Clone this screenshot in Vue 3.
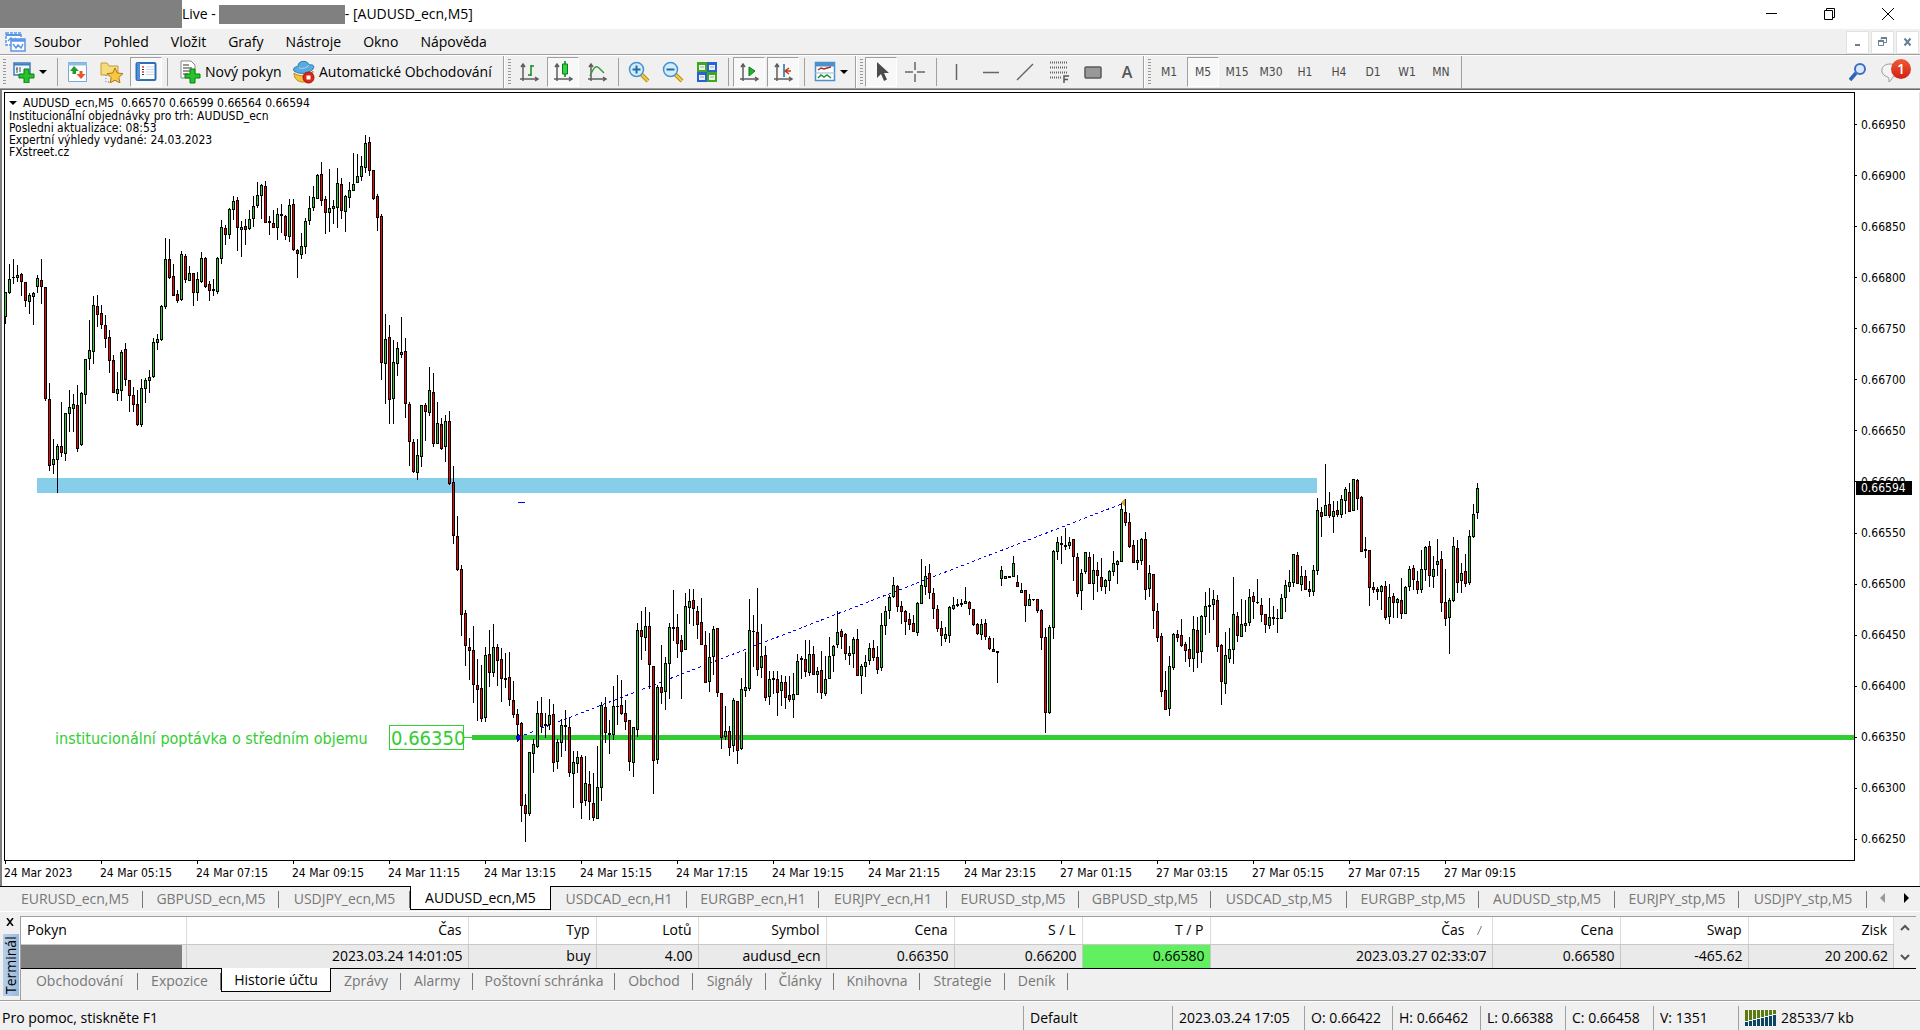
<script setup>
const menu = ['Soubor', 'Pohled', 'Vložit', 'Grafy', 'Nástroje', 'Okno', 'Nápověda']
const timeframes = ['M1', 'M5', 'M15', 'M30', 'H1', 'H4', 'D1', 'W1', 'MN']

const prices = Array.from({ length: 15 }, (_, i) => (0.6695 - i * 0.0005).toFixed(5))

const times = [
  '24 Mar 2023', '24 Mar 05:15', '24 Mar 07:15', '24 Mar 09:15', '24 Mar 11:15', '24 Mar 13:15',
  '24 Mar 15:15', '24 Mar 17:15', '24 Mar 19:15', '24 Mar 21:15', '24 Mar 23:15',
  '27 Mar 01:15', '27 Mar 03:15', '27 Mar 05:15', '27 Mar 07:15', '27 Mar 09:15'
]

const chartTabs = [
  ['EURUSD_ecn,M5', 136], ['GBPUSD_ecn,M5', 136], ['USDJPY_ecn,M5', 131], ['AUDUSD_ecn,M5', 141],
  ['USDCAD_ecn,H1', 136], ['EURGBP_ecn,H1', 132], ['EURJPY_ecn,H1', 128], ['EURUSD_stp,M5', 132],
  ['GBPUSD_stp,M5', 132], ['USDCAD_stp,M5', 136], ['EURGBP_stp,M5', 132], ['AUDUSD_stp,M5', 136],
  ['EURJPY_stp,M5', 124], ['USDJPY_stp,M5', 128]
]

const terminalTabs = [
  ['Obchodování', 117], ['Expozice', 83], ['Historie účtu', 110], ['Zprávy', 70], ['Alarmy', 72],
  ['Poštovní schránka', 142], ['Obchod', 78], ['Signály', 73], ['Články', 68], ['Knihovna', 86],
  ['Strategie', 85], ['Deník', 63]
]

const columns = [
  ['Pokyn', 165], ['Čas', 282], ['Typ', 128], ['Lotů', 102], ['Symbol', 128], ['Cena', 128],
  ['S / L', 128], ['T / P', 128], ['Čas', 282], ['Cena', 128], ['Swap', 128], ['Zisk', 0]
]
const order = [
  '', '2023.03.24 14:01:05', 'buy', '4.00', 'audusd_ecn', '0.66350', '0.66200', '0.66580',
  '2023.03.27 02:33:07', '0.66580', '-465.62', '20 200.62'
]

// One bar per entry: high, body top, body bottom, low, direction (g up, r down, k flat)
const series = `
292 292 317 324 g|264 279 293 294 g|259 277 278 284 k|265 275 278 282 g|273 274 282 296 r|282 282 301 307 r|293 295 302 314 g|292 293 297 325 g
275 278 287 293 g|259 280 287 304 r|287 287 399 401 r|383 399 466 471 r|439 459 465 474 g|444 446 460 493 g|402 446 453 457 r|413 413 454 461 g
390 407 414 432 g|394 404 409 432 g|385 405 449 452 r|392 393 445 446 g|359 359 395 404 g|320 350 359 370 g|296 305 352 364 g|295 306 315 327 r
305 313 325 329 r|315 325 339 348 r|330 337 361 373 r|355 360 393 393 r|372 389 394 401 g|350 352 391 401 g|343 349 380 386 r|380 380 396 412 r
387 395 405 412 r|390 404 425 426 r|379 388 425 427 g|378 380 389 403 g|370 377 381 393 g|338 342 377 378 g|334 339 343 350 g|305 306 340 341 g
238 259 307 309 g|239 259 278 279 r|264 276 296 296 r|290 294 301 303 r|251 254 300 301 g|254 256 280 283 r|266 273 281 281 g|273 273 293 306 r
272 279 293 301 g|252 258 282 283 g|257 258 287 288 r|281 284 291 301 r|279 289 291 296 k|257 258 292 294 g|220 227 259 264 g|225 228 235 245 r
208 209 235 239 g|196 201 210 220 g|197 200 228 251 r|221 227 230 257 g|219 226 230 245 r|210 219 229 230 g|196 206 219 227 g|182 195 206 208 g
184 185 196 219 g|181 186 223 223 r|216 221 223 235 k|210 223 228 228 r|208 214 228 240 g|204 214 216 233 k|215 216 236 240 r|199 205 237 242 g
199 204 250 251 r|249 250 254 278 r|233 246 255 259 g|218 221 247 254 g|196 208 221 225 g|186 197 208 211 g|174 175 199 199 g|162 174 201 206 r
196 199 213 234 r|169 208 213 232 g|200 206 209 224 g|168 183 208 228 g|178 184 211 219 r|195 196 212 232 g|182 190 198 208 g|153 184 191 191 g
154 176 183 183 g|156 166 177 181 g|135 143 168 173 g|137 142 171 176 r|170 170 199 200 r|194 196 218 231 r|214 216 363 380 r|314 339 364 404 g
325 337 400 424 r|340 362 399 424 g|342 348 364 376 g|317 352 355 358 g|338 351 404 418 r|402 404 442 466 r|439 442 472 473 r|439 455 473 480 g
405 405 457 467 g|403 405 412 441 r|367 390 413 416 g|373 392 444 447 r|402 423 444 444 g|418 424 449 450 r|415 421 447 462 g|411 421 484 485 r
466 482 536 544 r|516 536 570 571 r|565 569 615 636 r|610 613 646 666 r|638 647 651 680 r|626 650 685 703 r|659 685 690 721 r|665 688 719 722 r
647 655 718 722 g|630 654 673 687 r|624 647 673 677 g|644 647 661 686 r|648 659 679 702 r|653 678 680 688 k|652 677 700 706 r|681 700 715 718 r
709 714 725 742 r|722 723 806 822 r|794 805 814 842 r|752 752 814 816 g|739 744 754 773 g|701 713 747 748 g|697 713 727 733 r|713 724 726 738 k
699 715 725 730 g|704 714 763 772 r|739 742 762 769 g|719 725 743 757 g|710 725 727 751 k|718 727 773 777 r|751 762 774 808 g|751 757 764 773 g
755 757 803 819 r|756 783 801 806 g|771 784 802 820 r|773 803 818 821 r|746 787 819 819 g|702 705 788 801 g|697 707 733 743 r|720 733 735 754 k
686 706 735 740 g|675 706 707 725 k|680 705 714 715 r|700 713 722 730 r|720 720 762 771 r|727 727 763 777 g|623 630 730 737 g|611 630 637 660 r
607 626 638 651 g|612 626 665 689 r|666 666 761 794 r|685 687 760 764 g|645 687 693 704 r|657 663 692 710 g|623 627 664 699 g|590 627 629 641 k
614 627 644 658 r|635 640 652 699 r|593 606 650 650 g|589 601 608 624 g|589 600 609 626 r|606 611 625 639 r|598 622 645 645 r|631 645 683 683 r
633 657 682 692 g|626 629 657 675 g|628 628 693 697 r|693 693 738 749 r|706 731 737 740 g|726 731 748 756 r|698 700 746 752 g|701 701 751 764 r
678 689 749 750 g|652 687 691 697 g|599 630 689 691 g|615 631 632 667 k|588 632 670 676 r|624 656 668 678 g|646 655 698 701 r|671 679 697 705 g
671 678 680 694 k|671 679 693 716 r|675 682 691 706 g|676 682 698 709 r|676 695 700 702 r|673 694 700 718 g|654 661 695 695 g|656 658 660 679 k
640 659 672 677 r|640 654 673 676 g|646 654 675 675 r|667 671 675 693 g|651 670 693 699 r|656 679 694 696 g|637 656 679 679 g|645 646 656 672 g
611 632 645 648 g|629 631 637 649 r|633 634 654 660 r|646 653 656 665 g|637 639 654 668 g|629 639 676 676 r|664 666 676 694 g|655 662 667 677 g
643 648 661 665 g|640 648 658 661 r|646 657 670 674 r|613 625 668 671 g|606 611 626 635 g|595 597 611 619 g|577 585 597 598 g|585 586 607 612 r
601 606 612 624 r|610 611 622 635 r|613 619 625 630 r|615 623 632 632 r|602 603 633 636 g|559 585 604 604 g|566 576 587 595 g|564 573 593 599 r
588 593 609 619 r|605 609 629 632 r|621 628 636 646 r|627 634 639 642 g|606 607 636 643 g|597 605 609 610 g|599 604 606 607 k|599 603 605 607 k
587 601 604 604 g|601 602 609 615 r|609 609 625 626 r|623 624 634 635 r|619 624 635 640 g|619 623 637 640 r|636 638 649 650 r|638 649 652 652 r
651 651 653 683 k|566 570 579 586 g|576 576 579 579 g|576 576 578 578 k|556 563 577 577 g|575 582 587 587 r|583 590 593 593 g|590 590 606 622 r
594 599 606 606 g|599 599 600 601 k|599 599 611 613 r|609 610 638 650 r|628 637 713 733 r|625 627 713 714 g|550 551 628 639 g|537 542 552 560 g
536 543 545 564 k|528 545 547 550 k|537 542 546 549 g|539 539 557 581 r|553 557 594 597 r|569 573 591 610 g|552 552 572 574 g|552 557 584 584 r
554 570 584 600 g|562 570 576 592 r|558 577 587 591 r|579 580 587 594 g|570 571 581 591 g|551 563 572 576 g|560 561 565 584 g|503 509 562 562 g
499 512 523 526 r|513 522 547 548 r|540 545 563 563 r|540 560 563 570 g|538 539 561 565 g|532 539 590 600 r|565 573 589 597 g|574 574 611 629 r
603 611 638 642 r|633 636 692 697 r|671 690 710 710 r|656 666 709 716 g|633 634 668 670 g|630 634 638 642 r|619 635 646 647 r|642 644 651 662 r
637 649 659 667 r|616 629 659 672 g|617 630 653 668 r|615 616 652 663 g|592 606 617 635 g|588 605 607 633 k|590 599 605 620 g|595 600 647 652 r
644 645 682 705 r|632 655 684 694 g|628 649 659 663 g|577 614 650 664 g|612 616 636 642 r|599 624 637 637 g|600 623 626 632 g|589 597 623 626 g
592 596 602 619 r|579 602 603 604 k|598 605 615 622 r|614 614 625 633 r|598 617 626 629 g|606 617 619 625 k|609 618 619 633 k|594 598 619 619 g
580 585 598 612 g|570 582 587 592 g|554 554 583 587 g|552 555 584 584 r|566 576 585 591 g|570 576 590 590 r|581 589 592 597 r|565 570 592 596 g
498 510 571 575 g|507 512 517 537 r|464 505 516 516 g|492 504 516 518 r|501 511 517 533 g|501 510 515 517 r|495 499 515 518 g|487 489 501 514 g
483 492 512 512 r|479 479 511 511 g|479 480 499 510 r|496 497 552 552 r|537 549 551 558 k|550 550 588 606 r|582 587 590 593 r|587 589 592 600 r
585 586 592 610 g|581 586 618 620 r|584 597 617 624 g|593 596 603 618 r|598 599 603 618 g|578 600 614 619 r|586 587 614 614 g|566 569 587 591 g
565 568 580 590 r|571 581 590 594 r|550 569 590 593 g|546 547 570 581 g|541 546 576 587 r|556 569 577 588 g|539 561 565 576 g|551 559 603 612 r
569 602 619 626 r|598 600 618 654 g|537 546 601 602 g|540 548 583 593 r|563 573 581 593 g|554 571 584 587 r|530 536 583 585 g|504 514 537 538 g
483 488 513 519 g`

const candles = series.trim().split(/[\n|]/).map((bar, i) => {
  const [high, top, bottom, low, dir] = bar.split(' ')
  return { x: 5 + i * 4, high: +high, top: +top, bottom: +bottom, low: +low, dir }
})
</script>

<template>
  <div class="app">
    <header class="title">
      <span class="redacted account"></span>
      <span>Live -</span>
      <span class="redacted server"></span>
      <span>- [AUDUSD_ecn,M5]</span>
      <div class="window-buttons">
        <button aria-label="Minimalizovat"><svg width="12" height="12"><path d="M0 5.500h11" stroke="#000" /></svg></button>
        <button aria-label="Obnovit"><svg width="12" height="12" fill="none" stroke="#000"><path d="M.5 2.500h8v9h-8zM2.500 2.500v-2h8v9h-2" /></svg></button>
        <button aria-label="Zavřít"><svg width="12" height="12"><path d="M0 0l12 12M12 0L0 12" stroke="#000" /></svg></button>
      </div>
    </header>

    <nav class="menu">
      <svg width="21" height="20" fill="none" stroke="#5b95e6" stroke-width="1.500">
        <path d="M1 1h15v12H1z" fill="#fff" stroke-dasharray="3 1" /><path d="M1 3h15" stroke-width="2" /><path d="M3 9l3-3 2 3 3-3" />
        <path d="M6 7h14v12H6z" fill="#fff" /><path d="M6 8.500h14" stroke-width="2.500" /><path d="M8 12l3 4 2-3 3 3 2-4" />
      </svg>
      <button v-for="m in menu" :key="m">{{ m }}</button>
      <div class="mdi">
        <button aria-label="Minimalizovat graf"><svg width="10" height="10"><path d="M2 7h5v2H2z" fill="#6b7f92" /></svg></button>
        <button aria-label="Obnovit graf"><svg width="10" height="10" fill="none" stroke="#6b7f92"><path d="M.5 4.500h5v4h-5zM3 2.500V1.500h5.500v4H6" /><path d="M0 4h6M3 1h6" stroke-width="2" /></svg></button>
        <button aria-label="Zavřít graf"><svg width="10" height="10"><path d="M1.500 1.500l6 7M7.500 1.500l-6 7" stroke="#6b7f92" stroke-width="2" /></svg></button>
      </div>
    </nav>

    <div class="toolbar">
      <div class="group">
        <i class="grip"></i>
        <button class="drop new" aria-label="Nový graf">
          <svg width="24" height="22"><path d="M2 2h16v12H2z" fill="#eef6ff" stroke="#3d7fbc" stroke-width="1.500" /><path d="M2 3.500h16" stroke="#3d7fbc" stroke-width="2" /><path d="M5 6v6M4 8h2M8 6v5" stroke="#555" /><path d="M12 8h5v5h5v4h-5v5h-5v-5H7v-4h5z" fill="#27c32b" stroke="#0d7d14" /></svg>
          <i class="caret"></i>
        </button>
        <i class="sep"></i>
        <button aria-label="Přehled trhu"><svg width="22" height="22"><path d="M1.500 1.500h18v19h-18z" fill="#fff" stroke="#77a9d6" /><path d="M1 3h19" stroke="#8bbce8" stroke-width="3" /><path d="M7 5l5 5H9v3H5.500v-3H3z" fill="#1f9d2a" /><path d="M14 18l-4.500-5h3v-3h3v3h3z" fill="#e8562a" /></svg></button>
        <button aria-label="Navigátor"><svg width="24" height="22"><path d="M1 2h6l2 3h9v9H1z" fill="#f7dc7c" stroke="#c69a33" /><path d="M6 14v7h5" fill="none" stroke="#777" stroke-dasharray="1 2" /><path d="M15 7l2.300 5 5.700.6-4.200 3.900 1.200 5.500-5-2.800-5 2.800 1.200-5.500L7 12.600l5.700-.6z" fill="#f9c642" stroke="#a8791c" /></svg></button>
        <button class="on" aria-label="Terminál"><svg width="22" height="22"><rect x="1.500" y="2" width="19" height="17" rx="1" fill="#fff" stroke="#2f6fb9" stroke-width="2" /><path d="M2 2h3v17H2z" fill="#4c8fd6" /><path d="M7 6h2M7 11h2" stroke="#e33" stroke-width="1.500" /><path d="M7 8.500h2M7 13.500h2" stroke="#333" /><path d="M11 6h8M11 8.500h8M11 11h8M11 13.500h8" stroke="#c9d6e6" /></svg></button>
        <i class="sep"></i>
        <button class="text order"><svg width="22" height="24"><path d="M2 1h10l4 4v13H2z" fill="#fff" stroke="#8a8a8a" /><path d="M4 5h6M4 8h9M4 11h9M4 14h5" stroke="#777" stroke-width="1.500" /><path d="M11 9h5v5h5v4h-5v5h-5v-5H6v-4h5z" fill="#27c32b" stroke="#0d7d14" /></svg>Nový pokyn</button>
        <button class="text auto"><svg width="22" height="24"><path d="M1 13c5 4 14 4 19-2-1 8-5 11-10 11S1 19 1 13z" fill="#f5c43c" stroke="#b98a1c" /><path d="M1 11C-1 7 4 7 5 6c0-6 10-6 11-1 4-1 6 1 4 4-4 5-13 6-19 2z" fill="#5aa9df" stroke="#2c7ab5" /><path d="M6 8c3 1 8 0 10-3" fill="none" stroke="#a8d6f5" /><circle cx="15.500" cy="17.500" r="5.500" fill="#dd2718" stroke="#a31409" /><path d="M13.500 15.500h4v4h-4z" fill="#fff" /></svg>Automatické Obchodování</button>
      </div>
      <div class="group">
        <i class="grip"></i>
        <button aria-label="Sloupcový graf"><svg width="22" height="22"><path d="M5 3v17M2 18h17M3 6l2-3 2 3M17 16l3 2-3 2" fill="none" stroke="#5d5d5d" stroke-width="1.500" /><path d="M13 4v11M13 5h3M10 14h3" stroke="#128a1e" stroke-width="1.500" /></svg></button>
        <button class="on" aria-label="Svíčkový graf"><svg width="22" height="22"><path d="M5 3v17M2 18h17M3 6l2-3 2 3M17 16l3 2-3 2" fill="none" stroke="#5d5d5d" stroke-width="1.500" /><path d="M13 0v16" stroke="#0b7d16" stroke-width="1.500" /><path d="M10.500 3h5v10h-5z" fill="#35d340" stroke="#0b7d16" /></svg></button>
        <button aria-label="Čárový graf"><svg width="22" height="22"><path d="M5 3v17M2 18h17M3 6l2-3 2 3M17 16l3 2-3 2" fill="none" stroke="#5d5d5d" stroke-width="1.500" /><path d="M4 15c4-9 6-11 9-8l5 5" fill="none" stroke="#3c9a45" stroke-width="1.500" /></svg></button>
        <i class="sep"></i>
        <button aria-label="Přiblížit"><svg width="22" height="22"><path d="M13 13l7 7" stroke="#b88a12" stroke-width="4" /><path d="M13 13l7 7" stroke="#f2cf4d" stroke-width="2" /><circle cx="8.500" cy="8.500" r="7" fill="#d5ecfb" stroke="#4791cf" stroke-width="1.500" /><path d="M4.500 8.500h8M8.500 4.500v8" stroke="#1e6db0" stroke-width="2" /></svg></button>
        <button aria-label="Oddálit"><svg width="22" height="22"><path d="M13 13l7 7" stroke="#b88a12" stroke-width="4" /><path d="M13 13l7 7" stroke="#f2cf4d" stroke-width="2" /><circle cx="8.500" cy="8.500" r="7" fill="#d5ecfb" stroke="#4791cf" stroke-width="1.500" /><path d="M4.500 8.500h8" stroke="#1e6db0" stroke-width="2" /></svg></button>
        <button aria-label="Uspořádat okna"><svg width="22" height="22"><path d="M1 1h10v10H1zM11 11h10v10H11z" fill="#3fa91d" /><path d="M11 1h10v10H11zM1 11h10v10H1z" fill="#2b62d3" /><path d="M3 4h6v5H3zM13 4h6v5h-6zM3 14h6v5H3zM13 14h6v5h-6z" fill="#fff" opacity=".9" /><path d="M4 6h4M14 6h4M4 16h4M14 16h4" stroke="#9ab" /></svg></button>
        <i class="sep"></i>
        <button class="on" aria-label="Automatický posun"><svg width="22" height="22"><path d="M5 3v17M2 18h17M3 6l2-3 2 3M17 16l3 2-3 2" fill="none" stroke="#5d5d5d" stroke-width="1.500" /><path d="M11 6l6 4-6 5z" fill="#23b32e" stroke="#0b7d16" /></svg></button>
        <button class="on" aria-label="Odsazení grafu"><svg width="22" height="22"><path d="M5 3v17M2 18h17M3 6l2-3 2 3M17 16l3 2-3 2" fill="none" stroke="#5d5d5d" stroke-width="1.500" /><path d="M12 3v13" stroke="#1e6db0" stroke-width="1.500" /><path d="M13 10h6M17 7l-4 3 4 3" fill="none" stroke="#c23b12" stroke-width="1.500" /></svg></button>
        <i class="sep"></i>
        <button class="drop" aria-label="Šablony"><svg width="22" height="22"><path d="M1.500 1.500h19v18h-19z" fill="#fff" stroke="#4a90cf" stroke-width="1.500" /><path d="M1 3.500h20" stroke="#4a90cf" stroke-width="4" /><path d="M1 12h20" stroke="#8dbbe2" /><path d="M4 9l3-2 3 1 3-1 4-1" fill="none" stroke="#b02c18" stroke-width="1.500" /><path d="M4 17l3-3 3 2 3-2 4 3" fill="none" stroke="#1d9427" stroke-width="1.500" /></svg><i class="caret"></i></button>
      </div>
      <div class="group objects">
        <i class="grip"></i>
        <button class="on" aria-label="Kurzor"><svg width="22" height="22"><path d="M7 1v16l4-4 3 7 3-1.500-3-6.500h5z" fill="#4b4b4b" /></svg></button>
        <button aria-label="Zaměřovač"><svg width="22" height="22"><path d="M11 1v8M11 13v8M1 11h8M13 11h8" stroke="#666" stroke-width="1.500" /></svg></button>
        <i class="sep"></i>
        <button aria-label="Svislá čára"><svg width="22" height="22"><path d="M10.500 3v16" stroke="#666" stroke-width="1.500" /></svg></button>
        <button aria-label="Vodorovná čára"><svg width="22" height="22"><path d="M3 11.500h16" stroke="#666" stroke-width="1.500" /></svg></button>
        <button aria-label="Trendová čára"><svg width="22" height="22"><path d="M3 19L19 3" stroke="#666" stroke-width="1.500" /></svg></button>
        <button aria-label="Fibonacci"><svg width="22" height="22"><path d="M2 1.500h18M2 6.500h18M2 11.500h18M2 16.500h12" stroke="#666" stroke-dasharray="1 1" stroke-width="2" /><path d="M16 22v-7h5M16 18.500h4" fill="none" stroke="#555" stroke-width="1.500" /></svg></button>
        <button aria-label="Obdélník"><svg width="22" height="22"><rect x="3" y="6" width="16" height="11" rx="1" fill="#999" stroke="#5a5a5a" stroke-width="1.500" /></svg></button>
        <button class="letter">A</button>
      </div>
      <div class="group">
        <i class="grip"></i>
        <button v-for="t in timeframes" :key="t" class="tf" :class="{ on: t === 'M5' }">{{ t }}</button>
      </div>
      <div class="tools-right">
        <button aria-label="Hledat"><svg width="20" height="20"><path d="M8 11l-6 7" stroke="#2d63b8" stroke-width="3.500" /><circle cx="12" cy="7" r="5" fill="#dce9fa" stroke="#3a6fc4" stroke-width="2" /></svg></button>
        <button class="chat" aria-label="Zprávy"><svg width="24" height="22"><path d="M10 3c10 0 12 10 3 13-1 0-1 3-4 5 0-3 0-4-1-5C-1 14 0 3 10 3z" fill="#f4f4f4" stroke="#999" /></svg><b>1</b></button>
      </div>
    </div>

    <main class="chart">
      <div class="plot">
        <svg class="canvas" width="100%" height="767" shape-rendering="crispEdges">
          <g transform="translate(-5,-93)">
            <rect x="37" y="478" width="1280" height="15" fill="#87ceeb" />
            <path d="M464 737.500h8" stroke="#32cd32" />
            <rect x="472" y="735" width="3000" height="5" fill="#32cd32" />
            <rect x="389.500" y="725.500" width="74" height="24" fill="#fff" stroke="#32cd32" />
            <text x="391" y="745" class="level">0.66350</text>
            <text x="55" y="744" class="note">institucionální poptávka o středním objemu</text>
            <path d="M519 737L1124 503" stroke="#00f" stroke-dasharray="3 3" />
            <path d="M518 502.500h7" stroke="#00f" />
            <path d="M1125 498v9l-4-4z" fill="#daa520" />
            <g v-for="c in candles" :key="c.x">
              <rect :x="c.x" :y="c.high" width="1" :height="c.low - c.high" />
              <rect :x="c.x - 1" :y="c.top" width="3" :height="c.bottom - c.top" />
              <rect v-if="c.dir !== 'k'" :x="c.x" :y="c.top + 1" width="1" :height="c.bottom - c.top - 2" :class="c.dir" />
            </g>
            <path d="M516 736h2v-2h1v1h1v1h1v3h-1v1h-1v1h-1v-2h-2z" fill="#00f" />
          </g>
        </svg>
        <div class="info">
          <p class="quote"><i class="caret"></i>AUDUSD_ecn,M5&nbsp; 0.66570 0.66599 0.66564 0.66594</p>
          <p>Institucionální objednávky pro trh: AUDUSD_ecn</p>
          <p>Posledni aktualizace: 08:53</p>
          <p>Expertní výhledy vydané: 24.03.2023</p>
          <p>FXstreet.cz</p>
        </div>
      </div>
      <div class="price-axis">
        <div class="scale">
          <span v-for="p in prices" :key="p">{{ p }}</span>
        </div>
        <b>0.66594</b>
      </div>
      <div class="time-axis">
        <span v-for="t in times" :key="t">{{ t }}</span>
      </div>
    </main>

    <nav class="tabs chart-tabs">
      <button v-for="[name, w] in chartTabs" :key="name" :style="{ width: w + 'px' }" :class="{ active: name === 'AUDUSD_ecn,M5' }">{{ name }}</button>
      <div class="scroll">
        <i class="left"></i><i class="right"></i>
      </div>
    </nav>

    <section class="terminal">
      <aside>
        <button aria-label="Zavřít terminál"><svg width="8" height="8"><path d="M1 0l6 8M7 0L1 8" stroke="#000" stroke-width="1.500" /></svg></button>
        <span>Terminál</span>
      </aside>
      <div class="body">
        <div class="list">
          <table>
            <colgroup>
              <col v-for="([name, w], i) in columns" :key="i" :style="w ? { width: w + 'px' } : null">
            </colgroup>
            <thead>
              <tr><th v-for="([name], i) in columns" :key="i" :class="{ sorted: i === 8 }">{{ name }}<svg v-if="i === 8" width="5" height="9"><path d="M4.500 0L.5 9" stroke="#777" /></svg></th></tr>
            </thead>
            <tbody>
              <tr><td v-for="(v, i) in order" :key="i" :class="{ hit: i === 7 }"><span v-if="!i" class="redacted ticket"></span>{{ v }}</td></tr>
            </tbody>
          </table>
          <div class="scrollbar">
            <svg width="10" height="8" fill="none" stroke="#555" stroke-width="2"><path d="M1 6l4-4 4 4" /></svg>
            <svg width="10" height="8" fill="none" stroke="#555" stroke-width="2"><path d="M1 2l4 4 4-4" /></svg>
          </div>
        </div>
        <nav class="tabs">
          <button v-for="[name, w] in terminalTabs" :key="name" :style="{ width: w + 'px' }" :class="{ active: name === 'Historie účtu' }">{{ name }}</button>
        </nav>
      </div>
    </section>

    <footer class="status">
      <span class="help">Pro pomoc, stiskněte F1</span>
      <span class="profile">Default</span>
      <span class="date">2023.03.24 17:05</span>
      <span>O: 0.66422</span>
      <span>H: 0.66462</span>
      <span class="lc">L: 0.66388</span>
      <span>C: 0.66458</span>
      <span class="lc">V: 1351</span>
      <span class="traffic">
        <svg width="31" height="16"><g v-for="i in 8" :key="i"><rect :x="(i - 1) * 4" y="0" width="3" :height="12 - i" fill="#5b7a12" /><rect :x="(i - 1) * 4" :y="13 - i" width="3" :height="3 + i" fill="#0c4464" /></g></svg>
        28533/7 kb
      </span>
    </footer>
  </div>
</template>

<style>
body { margin: 0; background: #f0f0f0; }
</style>

<style scoped>
.app { display: flex; flex-direction: column; min-height: 100vh; overflow: hidden; background: #f0f0f0; color: #000; font: 14px/20px "Open Sans", "Noto Sans", sans-serif; }
.app * { box-sizing: border-box; }
button { flex: none; padding: 0; border: 0; background: none; color: inherit; font: inherit; white-space: nowrap; }
svg { display: block; flex: none; }
p { margin: 0; }

.redacted { display: block; background: #808080; }
.title { display: flex; align-items: center; height: 29px; padding-bottom: 1px; background: #fff; }
.account { width: 182px; height: 28px; }
.server { width: 126px; height: 19px; margin-left: 3px; }
.window-buttons { display: flex; margin-left: auto; padding-right: 3px; }
.window-buttons button { display: flex; width: 58px; height: 28px; align-items: center; justify-content: center; }

.menu { display: flex; align-items: center; height: 27px; padding-left: 5px; border-bottom: 1px solid #fff; box-shadow: inset 0 -1px #a0a0a0; }
.menu > svg { margin-right: 8px; }
.menu > button { margin-right: 22px; }
.mdi { display: flex; gap: 2px; margin-left: auto; padding-right: 1px; }
.mdi button { display: flex; width: 23px; height: 23px; align-items: center; justify-content: center; border: 1px solid #e2e2e2; background: #fff; }

.toolbar { display: flex; height: 34px; padding-bottom: 1px; border-bottom: 1px solid #696969; box-shadow: inset 0 -1px #a0a0a0; }
.group { display: flex; flex: none; gap: 2px; align-items: center; padding: 0 4px 0 3px; border-right: 1px solid #a0a0a0; }
.group + .group { border-left: 1px solid #fff; }
.group.objects { padding-right: 0; }
.grip { width: 3px; height: 27px; background: repeating-linear-gradient(#999 0 1px, #f0f0f0 1px 3px); }
.group button { display: flex; width: 32px; height: 30px; align-items: center; justify-content: center; border: 1px solid transparent; }
.group button.on { border-color: #a0a0a0 #fff #fff #a0a0a0; background: #f8f8f8; }
.group .sep { width: 1px; height: 28px; margin: 0 2px 0 3px; background: #a0a0a0; }
.group .drop { width: 42px; justify-content: space-between; padding: 0 2px 0 4px; }
.group .new { width: 44px; padding: 0 4px 0 3px; }
.caret { width: 0; height: 0; border: 4px solid transparent; border-top-color: #000; border-bottom: 0; }
.group .text { gap: 4px; justify-content: flex-start; padding: 0 0 0 6px; }
.group .order { width: 112px; }
.group .auto { width: 213px; }
.group .letter { color: #555; font-size: 16px; font-weight: 600; }
.group .tf { color: #4a4a4a; font: 12px/16px "DejaVu Sans Condensed", "Noto Sans", sans-serif; }
.tools-right { display: flex; gap: 12px; align-items: center; margin-left: auto; padding-right: 8px; }
.chat { position: relative; width: 32px; }
.chat b { position: absolute; top: -2px; right: 1px; width: 20px; height: 20px; border-radius: 50%; background: linear-gradient(#ee5a3a, #d2200f); color: #fff; font: 600 14px/20px "Open Sans", sans-serif; text-align: center; }

.chart { display: grid; flex: 1; grid-template-columns: 1fr 65px; grid-template-rows: auto 1fr; padding: 2px 0 0 2px; border-left: 2px solid #808080; background: #fff; font: 12px/14px "DejaVu Sans Condensed", "Noto Sans", sans-serif; }
.plot { position: relative; border: 1px solid #000; }
.canvas { overflow: hidden; }
.level { fill: #32cd32; font: 20px "DejaVu Sans Condensed", "Noto Sans", sans-serif; }
.note { fill: #32cd32; font: 16px "DejaVu Sans Condensed", "Noto Sans", sans-serif; }
.g { fill: #32cd32; }
.r { fill: #f00; }
.info { position: absolute; top: 3px; left: 4px; line-height: 12px; }
.quote { display: flex; align-items: center; line-height: 14px; }
.quote .caret { margin-right: 6px; }
.price-axis { position: relative; grid-row: 1 / 3; grid-column: 2; padding-top: 7px; border-right: 1px solid #e3e3e3; }
.scale { display: flex; flex-direction: column; height: 766px; }
.scale span { display: flex; flex: 1; align-items: center; }
.scale span::before { content: ""; width: 2px; height: 1px; margin-right: 4px; background: #000; }
.price-axis b { position: absolute; top: 389px; left: 1px; width: 56px; padding-left: 5px; background: #000; color: #fff; font-weight: 400; }
.time-axis { display: flex; grid-row: 2; grid-column: 1; min-width: 0; overflow: hidden; }
.time-axis span { flex: none; width: 96px; white-space: nowrap; }
.time-axis span::before { content: ""; display: block; width: 1px; height: 3px; margin: 0 0 2px 1px; background: #000; }

.tabs { display: flex; height: 26px; border-top: 1px solid #000; }
.tabs button { position: relative; height: 24px; color: #777; text-align: center; line-height: 22px; }
.tabs button::after { content: ""; position: absolute; top: 4px; right: 0; width: 1px; height: 17px; background: #777; }
.tabs .active { margin-top: -1px; border: 1px solid #000; border-top: 0; background: #fff; color: #000; line-height: 24px; }
.tabs .active::after { display: none; }
.chart-tabs { padding-left: 7px; border-bottom: 1px solid #fff; }
.scroll { display: flex; gap: 19px; margin-left: 13px; padding-top: 6px; }
.scroll i { width: 0; height: 0; border: 5px solid transparent; }
.scroll .left { border-right-color: #999; border-left: 0; }
.scroll .right { border-left-color: #000; border-right: 0; }

.terminal { display: flex; height: 89px; padding: 4px 4px 0 3px; border-bottom: 1px solid #a0a0a0; }
aside { display: flex; flex-direction: column; width: 17px; }
aside button { display: flex; height: 18px; align-items: flex-start; padding: 2px 0 0 3px; }
aside span { flex: none; width: 16px; height: 62px; background: linear-gradient(90deg, #9db9da, #b5d0ec); line-height: 16px; text-align: center; writing-mode: vertical-rl; transform: rotate(180deg); }
.body { flex: 1; min-width: 0; border-top: 1px solid #a0a0a0; border-left: 1px solid #a0a0a0; }
.body .tabs { height: 27px; }
.list { display: flex; }
table { flex: 1; min-width: 0; border-collapse: collapse; table-layout: fixed; }
th, td { padding: 0 6px; border-right: 1px solid #dcdcdc; font-weight: 400; text-align: right; white-space: nowrap; }
th { height: 27px; border-bottom: 1px solid #c8c8c8; background: #fff; }
th:first-child { text-align: left; }
td { height: 24px; padding-right: 5px; border-color: #c8c8c8; background: #eaeaea; }
td:first-child { padding: 0; }
.ticket { width: 161px; height: 23px; }
.sorted svg { display: inline-block; margin: 0 4px 0 12px; }
td.hit { background: #60f060; }
.scrollbar { display: flex; flex-direction: column; align-items: center; justify-content: space-between; width: 22px; padding: 7px 0; }

.status { display: flex; height: 29px; padding-top: 4px; border-top: 1px solid #fff; }
.status span { display: flex; flex: none; width: 88px; height: 24px; align-items: center; padding-left: 6px; border-left: 1px solid #a0a0a0; }
.status .help { flex: 1; padding-left: 2px; border: 0; }
.status .profile { width: 149px; }
.status .date { width: 132px; }
.status .lc { width: 85px; }
.status .traffic { gap: 5px; width: 182px; }
</style>
